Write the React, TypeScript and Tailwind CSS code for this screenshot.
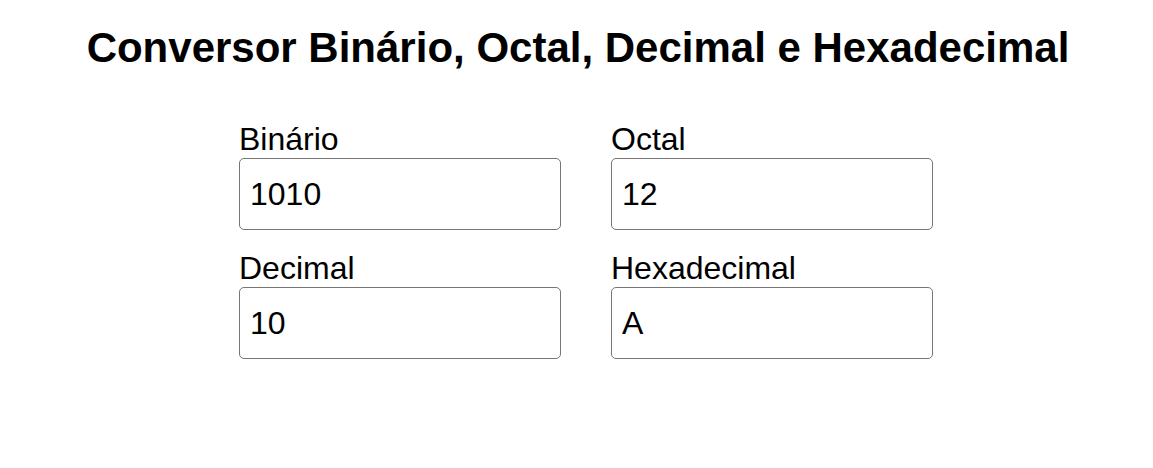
import React, { useState } from "react";

const font = { fontFamily: '"Liberation Sans", Arial, sans-serif' };

function Field({ label, value }: { label: string; value: string }) {
  return (
    <div className="flex flex-col">
      <label className="text-[32px] leading-[37px] text-black">{label}</label>
      <input
        readOnly
        value={value}
        className="w-[322px] h-[72px] border border-[#767676] rounded-[5px] px-[10px] text-[32px] text-black bg-white outline-none"
        style={font}
      />
    </div>
  );
}

export default function App() {
  const [v] = useState({ bin: "1010", oct: "12", dec: "10", hex: "A" });
  return (
    <div className="w-[1153px] h-[468px] bg-white text-black" style={font}>
      <h1 className="text-[42px] font-bold text-center pt-[24px] pl-[3px] leading-[48px]">
        Conversor Binário, Octal, Decimal e Hexadecimal
      </h1>
      <div className="flex justify-center mt-[49px]">
        <div className="pl-[19px] grid grid-cols-[322px_322px] gap-x-[50px] gap-y-[20px]">
          <Field label="Binário" value={v.bin} />
          <Field label="Octal" value={v.oct} />
          <Field label="Decimal" value={v.dec} />
          <Field label="Hexadecimal" value={v.hex} />
        </div>
      </div>
    </div>
  );
}
